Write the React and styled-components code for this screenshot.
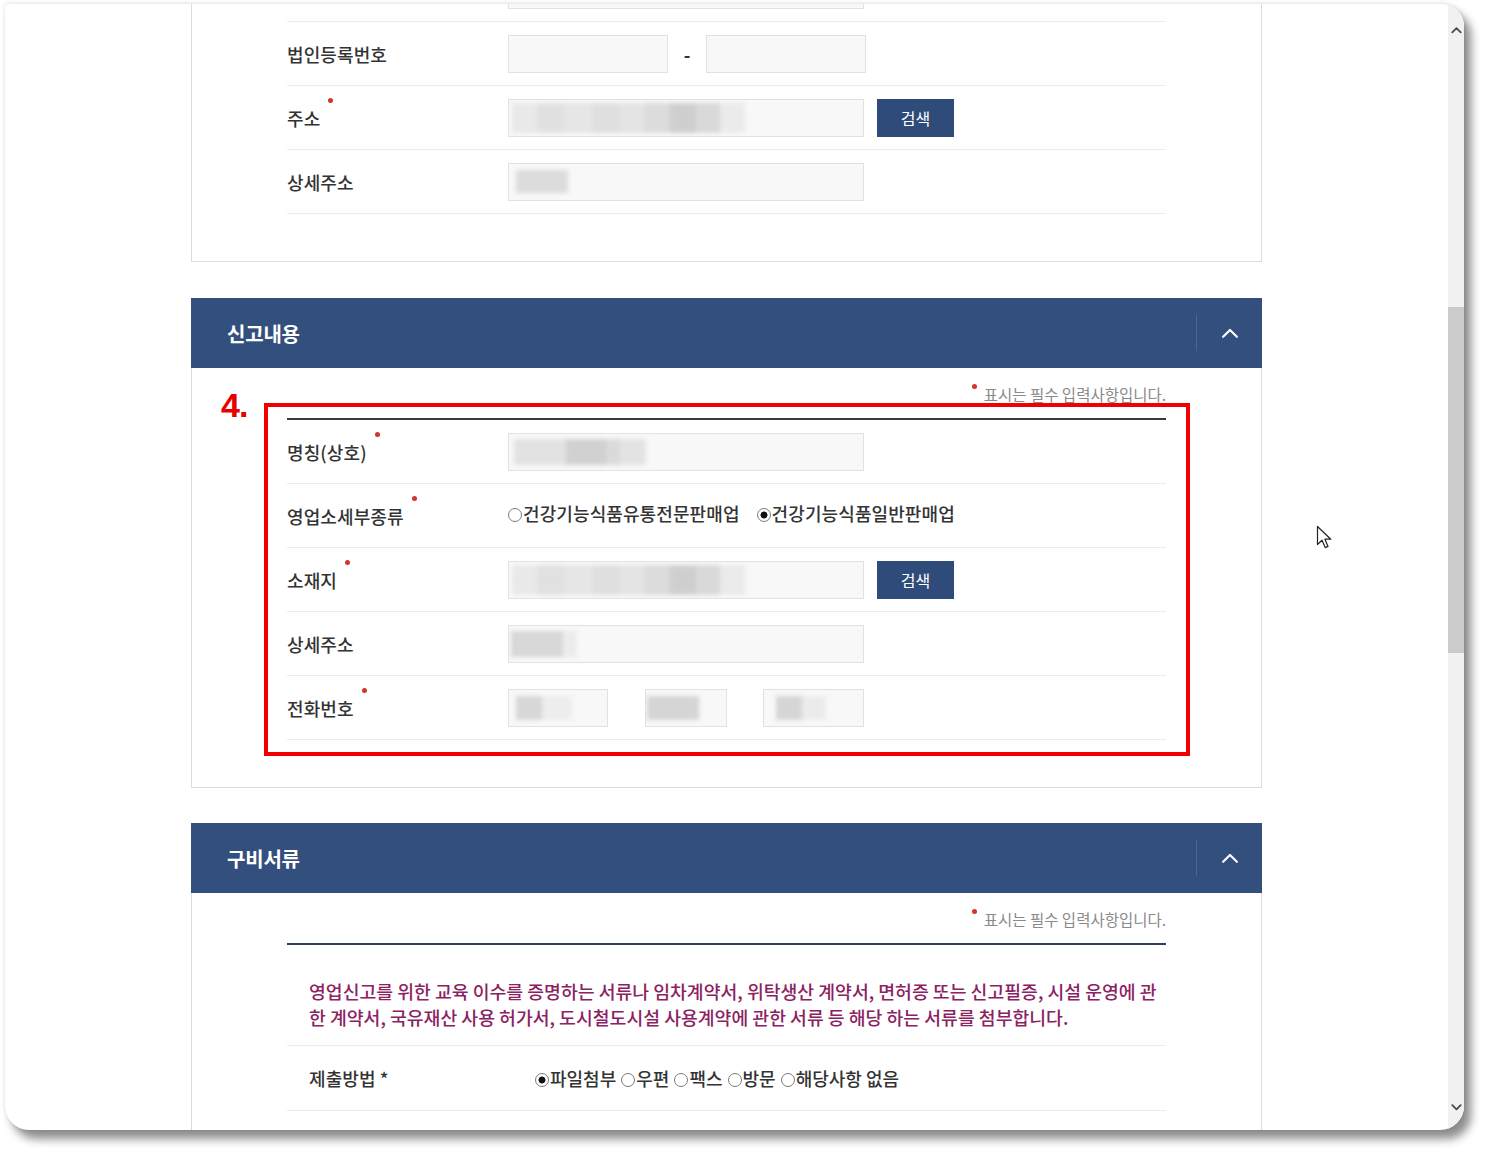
import React from 'react';
import styled, { createGlobalStyle } from 'styled-components';

const GlobalStyle = createGlobalStyle`
  html, body {
    margin: 0;
    padding: 0;
    background: #fff;
  }
  body {
    font-family: "Noto Sans CJK KR", "Noto Sans", sans-serif;
    color: #333;
  }
  * { box-sizing: border-box; }
`;

const Stage = styled.div`
  width: 1492px;
  height: 1159px;
  padding: 4px 0 0 5px;
  overflow: hidden;
`;

const Window = styled.div`
  width: 1459px;
  height: 1126px;
  display: flex;
  background: #fff;
  border-radius: 4px 22px 24px 24px;
  overflow: hidden;
  box-shadow: 0 -1px 4px rgba(0, 0, 0, 0.12), 7px 9px 10px rgba(0, 0, 0, 0.45);
`;

const Main = styled.main`
  position: relative;
  flex: 1;
  overflow: hidden;
`;

const Column = styled.div`
  width: 1071px;
  margin: 0 auto;
`;

const Panel = styled.section`
  position: relative;
  margin-top: ${p => p.$top}px;
  border: 1px solid #dcdcdc;
  border-top: none;
`;

const PanelHead = styled.header`
  height: 70px;
  margin: 0 -1px;
  display: flex;
  align-items: center;
  justify-content: space-between;
  padding-left: 36px;
  background: #334f7d;
  color: #fff;
  font-size: 20px;
  font-weight: 700;
  letter-spacing: -0.2px;
`;

const Toggle = styled.div`
  width: 66px;
  height: 36px;
  display: flex;
  align-items: center;
  justify-content: center;
  border-left: 1px solid rgba(255, 255, 255, 0.14);
`;

const PanelBody = styled.div`
  padding: ${p => p.$pt}px 95px 47px;
`;

const Note = styled.div`
  height: 24px;
  margin-bottom: 12px;
  display: flex;
  justify-content: flex-end;
  align-items: center;
  font-size: 15.5px;
  color: #8a8a8a;
  line-height: 24px;
`;

const NoteDot = styled.span`
  width: 5px;
  height: 5px;
  border-radius: 50%;
  background: #d0342c;
  margin: 0 7px 16px 0;
`;

const Table = styled.div`
  border-top: ${p => (p.$line ? `2px solid ${p.$line}` : 'none')};
`;

const Row = styled.div`
  height: ${p => p.$h || 64}px;
  display: flex;
  align-items: center;
  padding-left: ${p => p.$indent || 0}px;
  border-bottom: 1px solid #ebebeb;
`;

const Label = styled.div`
  width: ${p => p.$w || 221}px;
  flex-shrink: 0;
  display: flex;
  align-items: center;
  font-size: 18px;
  font-weight: 500;
  line-height: 24px;
  letter-spacing: 0.1px;
  color: #333;
`;

const Req = styled.span`
  width: 5px;
  height: 5px;
  border-radius: 50%;
  background: #d0342c;
  margin: 0 0 35px 8px;
`;

const Field = styled.div`
  display: flex;
  align-items: center;
`;

const Box = styled.div`
  width: ${p => p.$w}px;
  height: 38px;
  display: flex;
  align-items: center;
  padding-left: ${p => p.$pad || 3}px;
  background: #f8f8f8;
  border: 1px solid #e1e1e1;
  overflow: hidden;
`;

const Smudge = styled.div`
  display: flex;
  height: ${p => p.$h || 28}px;
  filter: blur(2px);
`;

const Seg = styled.span`
  width: ${p => p.$w}px;
  height: 100%;
  background: ${p => p.$c};
`;

const Dash = styled.span`
  width: 38px;
  text-align: center;
  font-size: 18px;
  font-weight: 700;
  color: #333;
`;

const Gap = styled.span`
  width: ${p => p.$w}px;
`;

const Button = styled.button`
  width: 77px;
  height: 38px;
  margin-left: 13px;
  border: none;
  background: #2f4b7a;
  color: #fff;
  font-family: inherit;
  font-size: 16px;
`;

const Options = styled.div`
  display: flex;
  align-items: center;
  gap: ${p => p.$gap}px;
  margin-bottom: ${p => p.$lift || 0}px;
  font-size: 18px;
  font-weight: 500;
  letter-spacing: ${p => p.$ls}px;
  color: #333;
`;

const Option = styled.label`
  display: inline-flex;
  align-items: center;
  gap: 1px;
`;

const RadioDot = styled.span`
  width: 14px;
  height: 14px;
  margin-top: 4px;
  border-radius: 50%;
  border: 1px solid #7a7a7a;
  background: ${p => (p.$on ? 'radial-gradient(circle, #111 0 3.2px, #fff 3.8px)' : '#fff')};
`;

const Guide = styled.p`
  margin: 0;
  padding: 33px 0 15px 22px;
  border-bottom: 1px solid #ebebeb;
  font-size: 18.3px;
  font-weight: 500;
  line-height: 26px;
  letter-spacing: 0;
  color: #8b2262;
  white-space: nowrap;
`;

const Marker = styled.div`
  position: absolute;
  left: 72px;
  top: 105px;
  width: 926px;
  height: 353px;
  border: 4px solid #f00000;
  pointer-events: none;
`;

const MarkerNo = styled.div`
  position: absolute;
  left: 29px;
  top: 88px;
  font-family: "Liberation Sans", Arial, sans-serif;
  font-weight: 700;
  font-size: 34px;
  color: #e80000;
  letter-spacing: -1px;
`;

const Cursor = styled.svg`
  position: absolute;
  left: 1311px;
  top: 521px;
`;

const Scrollbar = styled.div`
  width: 16px;
  flex-shrink: 0;
  display: flex;
  flex-direction: column;
  align-items: center;
  background: #f1f1f1;
`;

const ScrollBtn = styled.div`
  height: 17px;
  display: flex;
  align-items: center;
  margin: ${p => (p.$down ? 'auto 0 14px' : '18px 0 0')};
`;

const Thumb = styled.div`
  width: 16px;
  height: 346px;
  margin-top: 268px;
  background: #cbcbcb;
`;

const ADDR = [
  [25, '#e9e9e9'], [27, '#e1e1e1'], [28, '#e6e6e6'], [27, '#dfdfdf'], [25, '#e4e4e4'],
  [26, '#dcdcdc'], [26, '#cfcfcf'], [24, '#d9d9d9'], [25, '#ebebeb'],
];
const NAME = [[52, '#e2e2e2'], [40, '#d1d1d1'], [14, '#dadada'], [26, '#e3e3e3']];

const Blur = ({ segs, h }) => (
  <Smudge $h={h}>
    {segs.map(([w, c], i) => <Seg key={i} $w={w} $c={c} />)}
  </Smudge>
);

const Chevron = ({ color = '#fff', size = 18, weight = 2.2, down }) => (
  <svg width={size} height={size * 0.6} viewBox="0 0 18 11" fill="none">
    <path
      d={down ? 'M2 2 L9 9 L16 2' : 'M2 9 L9 2 L16 9'}
      stroke={color}
      strokeWidth={weight}
      strokeLinecap="round"
      strokeLinejoin="round"
    />
  </svg>
);

const Radio = ({ on, children }) => (
  <Option>
    <RadioDot $on={on} />
    {children}
  </Option>
);

const RequiredNote = () => (
  <Note>
    <NoteDot />
    표시는 필수 입력사항입니다.
  </Note>
);

const Head = ({ title }) => (
  <PanelHead>
    {title}
    <Toggle>
      <Chevron />
    </Toggle>
  </PanelHead>
);

export default function App() {
  return (
    <>
      <GlobalStyle />
      <Stage>
        <Window>
          <Main>
            <Column>
              {/* 사업자 정보 (위쪽은 스크롤되어 잘림) */}
              <Panel $top={-46}>
                <PanelBody $pt={0}>
                  <Row>
                    <Label />
                    <Field><Box $w={356} /></Field>
                  </Row>
                  <Row>
                    <Label>법인등록번호</Label>
                    <Field>
                      <Box $w={160} />
                      <Dash>-</Dash>
                      <Box $w={160} />
                    </Field>
                  </Row>
                  <Row>
                    <Label>주소<Req /></Label>
                    <Field>
                      <Box $w={356}><Blur segs={ADDR} h={30} /></Box>
                      <Button>검색</Button>
                    </Field>
                  </Row>
                  <Row>
                    <Label>상세주소</Label>
                    <Field>
                      <Box $w={356} $pad={7}><Blur segs={[[52, '#dcdcdc']]} h={23} /></Box>
                    </Field>
                  </Row>
                </PanelBody>
              </Panel>

              {/* 신고내용 */}
              <Panel $top={36}>
                <Head title="신고내용" />
                <PanelBody $pt={14}>
                  <RequiredNote />
                  <Table $line="#3a3a3a">
                    <Row>
                      <Label>명칭(상호)<Req /></Label>
                      <Field>
                        <Box $w={356} $pad={5}><Blur segs={NAME} h={26} /></Box>
                      </Field>
                    </Row>
                    <Row>
                      <Label>영업소세부종류<Req /></Label>
                      <Options $gap={17} $ls={0.1} $lift={6}>
                        <Radio>건강기능식품유통전문판매업</Radio>
                        <Radio on>건강기능식품일반판매업</Radio>
                      </Options>
                    </Row>
                    <Row>
                      <Label>소재지<Req /></Label>
                      <Field>
                        <Box $w={356}><Blur segs={ADDR} h={30} /></Box>
                        <Button>검색</Button>
                      </Field>
                    </Row>
                    <Row>
                      <Label>상세주소</Label>
                      <Field>
                        <Box $w={356} $pad={2}><Blur segs={[[52, '#d8d8d8'], [14, '#ececec']]} h={26} /></Box>
                      </Field>
                    </Row>
                    <Row>
                      <Label>전화번호<Req /></Label>
                      <Field>
                        <Box $w={100} $pad={7}><Blur segs={[[26, '#d7d7d7'], [30, '#ededed']]} h={24} /></Box>
                        <Gap $w={37} />
                        <Box $w={82} $pad={1}><Blur segs={[[52, '#d5d5d5']]} h={24} /></Box>
                        <Gap $w={36} />
                        <Box $w={101} $pad={12}><Blur segs={[[26, '#d6d6d6'], [24, '#ebebeb']]} h={24} /></Box>
                      </Field>
                    </Row>
                  </Table>
                </PanelBody>
                <MarkerNo>4.</MarkerNo>
                <Marker />
              </Panel>

              {/* 구비서류 */}
              <Panel $top={35}>
                <Head title="구비서류" />
                <PanelBody $pt={14}>
                  <RequiredNote />
                  <Table $line="#2c3e66">
                    <Guide>
                      영업신고를 위한 교육 이수를 증명하는 서류나 임차계약서, 위탁생산 계약서, 면허증 또는 신고필증, 시설 운영에 관
                      <br />
                      한 계약서, 국유재산 사용 허가서, 도시철도시설 사용계약에 관한 서류 등 해당 하는 서류를 첨부합니다.
                    </Guide>
                    <Row $h={65} $indent={22}>
                      <Label $w={226}>제출방법 *</Label>
                      <Options $gap={5} $ls={0}>
                        <Radio on>파일첨부</Radio>
                        <Radio>우편</Radio>
                        <Radio>팩스</Radio>
                        <Radio>방문</Radio>
                        <Radio>해당사항 없음</Radio>
                      </Options>
                    </Row>
                  </Table>
                </PanelBody>
              </Panel>
            </Column>

            <Cursor width="18" height="25" viewBox="0 0 18 25">
              <path
                d="M1.5 1.5 L1.5 19.5 L6 15.2 L9.2 22.6 L12 21.4 L8.9 14.2 L14.8 14.2 Z"
                fill="#fff"
                stroke="#222"
                strokeWidth="1.2"
                strokeLinejoin="round"
              />
            </Cursor>
          </Main>

          <Scrollbar>
            <ScrollBtn><Chevron color="#4a4a4a" size={11} weight={3} /></ScrollBtn>
            <Thumb />
            <ScrollBtn $down><Chevron color="#4a4a4a" size={11} weight={3} down /></ScrollBtn>
          </Scrollbar>
        </Window>
      </Stage>
    </>
  );
}
